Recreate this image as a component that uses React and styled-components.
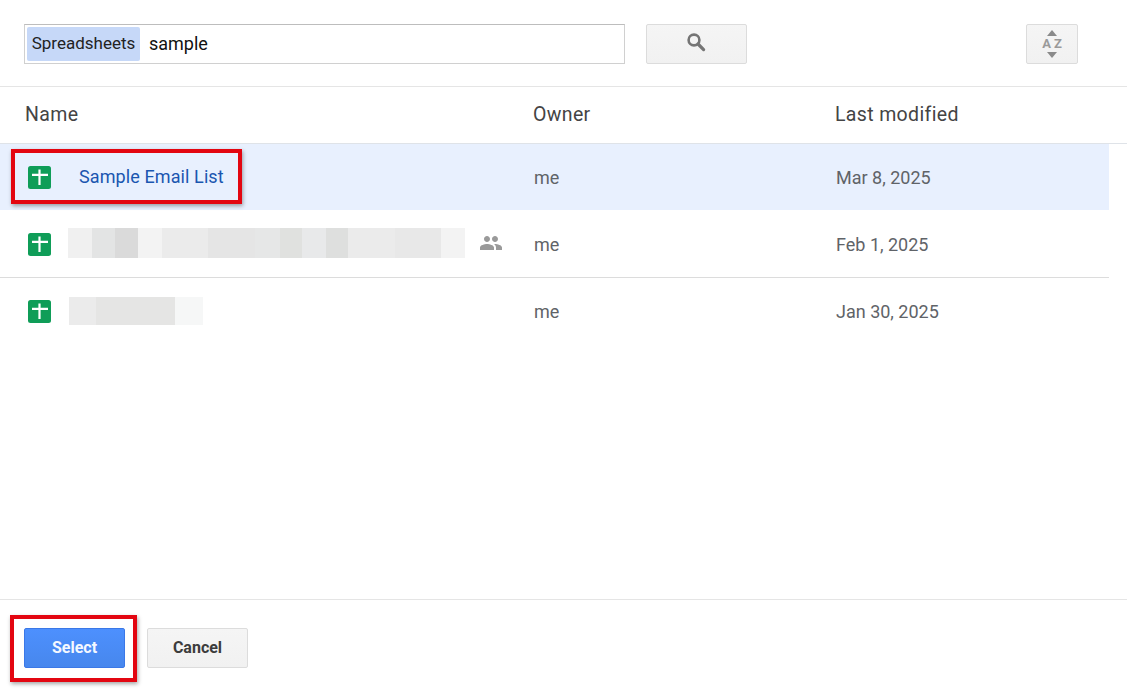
import React from 'react';
import styled, { createGlobalStyle } from 'styled-components';

const GlobalStyle = createGlobalStyle`
  html, body {
    margin: 0;
    padding: 0;
    background: #fff;
    font-family: Roboto, "Liberation Sans", Arial, sans-serif;
  }
`;

const FILES = [
  { id: 1, owner: 'me', date: 'Mar 8, 2025', name: 'Sample Email List', selected: true },
  {
    id: 2,
    owner: 'me',
    date: 'Feb 1, 2025',
    shared: true,
    blur: [
      [24, '#f0f0f0'], [23, '#e3e4e4'], [23, '#dadada'], [24, '#f3f3f3'], [46, '#ebebeb'],
      [47, '#e5e5e5'], [25, '#e6e7e7'], [22, '#e0e1df'], [24, '#e8e9ea'], [22, '#dedfde'],
      [47, '#ebebeb'], [46, '#e8e8e8'], [24, '#f3f3f3'],
    ],
  },
  {
    id: 3,
    owner: 'me',
    date: 'Jan 30, 2025',
    short: true,
    blur: [[27, '#ebebeb'], [79, '#e5e5e4'], [28, '#f6f7f7']],
  },
];

const SheetIcon = () => (
  <svg width="23" height="23" viewBox="0 0 23 23">
    <rect width="23" height="23" rx="2.5" fill="#0f9d58" />
    <path d="M10.4 3.500h2.200v4.200H20v2.200h-7.400V19h-2.200V9.900H4V7.700h6.400z" fill="#fff" />
  </svg>
);

const SearchIcon = () => (
  <svg width="20" height="20" viewBox="0 0 20 20">
    <circle cx="8" cy="8" r="5.4" fill="none" stroke="#757575" strokeWidth="2.6" />
    <path d="M12 12l5.6 5.6" stroke="#757575" strokeWidth="3.2" strokeLinecap="round" />
  </svg>
);

const PeopleIcon = () => (
  <svg width="24" height="24" viewBox="0 0 24 24" fill="#9a9a9a">
    <path d="M16 11c1.66 0 2.99-1.34 2.99-3S17.66 5 16 5s-3 1.34-3 3 1.34 3 3 3zm-8 0c1.66 0 2.99-1.34 2.99-3S9.66 5 8 5 5 6.34 5 8s1.34 3 3 3zm0 2c-2.33 0-7 1.17-7 3.5V19h14v-2.5C15 14.17 10.33 13 8 13zm8 0c-.29 0-.62.02-.97.05 1.16.84 1.97 1.97 1.97 3.45V19h6v-2.5c0-2.33-4.67-3.5-7-3.5z" />
  </svg>
);

const App = () => (
  <Page>
    <GlobalStyle />
    <Toolbar>
      <SearchBox>
        <Chip>Spreadsheets</Chip>
        <Query>sample</Query>
      </SearchBox>
      <SearchButton aria-label="Search">
        <SearchIcon />
      </SearchButton>
      <SortButton aria-label="Sort">
        <SortArrow />
        <SortLetters>AZ</SortLetters>
        <SortArrow $down />
      </SortButton>
    </Toolbar>

    <HeaderRow>
      <NameHead>Name</NameHead>
      <OwnerHead>Owner</OwnerHead>
      <DateHead>Last modified</DateHead>
    </HeaderRow>

    <List>
      {FILES.map((file) => (
        <FileRow key={file.id} $selected={file.selected} $last={file.short}>
          <IconCell>
            <SheetIcon />
          </IconCell>
          <NameCell>
            {file.name ? (
              <FileName>{file.name}</FileName>
            ) : (
              <Mosaic $short={file.short}>
                {file.blur.map(([width, color], i) => (
                  <Tile key={i} $color={color} style={{ width }} />
                ))}
              </Mosaic>
            )}
          </NameCell>
          <SharedCell>{file.shared && <PeopleIcon />}</SharedCell>
          <OwnerCell>{file.owner}</OwnerCell>
          <DateCell>{file.date}</DateCell>
        </FileRow>
      ))}
      <RowMark />
    </List>

    <Footer>
      <SelectButton>
        Select
        <ButtonMark />
      </SelectButton>
      <CancelButton>Cancel</CancelButton>
    </Footer>
  </Page>
);

export default App;

const Page = styled.div`
  width: 1127px;
  height: 694px;
  display: flex;
  flex-direction: column;
  overflow: hidden;
  background: #fff;
`;

const Toolbar = styled.div`
  box-sizing: border-box;
  height: 87px;
  padding: 24px 49px 0 24px;
  display: flex;
  align-items: flex-start;
  border-bottom: 1px solid #e5e5e5;
`;

const SearchBox = styled.div`
  box-sizing: border-box;
  width: 601px;
  height: 40px;
  display: flex;
  align-items: center;
  padding-left: 2px;
  border: 1px solid #d0d0d0;
  border-top-color: #bdbdbd;
`;

const Chip = styled.span`
  box-sizing: border-box;
  width: 113px;
  height: 34px;
  line-height: 33px;
  text-align: center;
  font-size: 17px;
  color: #222;
  background: #c6d8f8;
  border-radius: 2px;
`;

const Query = styled.span`
  margin: -2px 0 0 9px;
  font-size: 18px;
  color: #111;
`;

const GreyButton = styled.button`
  box-sizing: border-box;
  height: 40px;
  padding: 0;
  display: flex;
  align-items: center;
  justify-content: center;
  font-family: inherit;
  background: linear-gradient(#f5f5f5, #f1f1f1);
  border: 1px solid #dcdcdc;
  border-radius: 2px;
`;

const SearchButton = styled(GreyButton)`
  width: 101px;
  margin-left: 21px;
  padding: 0 2px 4px 0;
`;

const SortButton = styled(GreyButton)`
  width: 52px;
  margin-left: auto;
  flex-direction: column;
  gap: 2px;
`;

const SortArrow = styled.span`
  width: 0;
  height: 0;
  border-left: 5px solid transparent;
  border-right: 5px solid transparent;
  ${(p) => (p.$down ? 'border-top: 6px solid #8a8a8a;' : 'border-bottom: 6px solid #8a8a8a;')}
`;

const SortLetters = styled.span`
  padding-left: 3px;
  font-size: 13px;
  line-height: 12px;
  font-weight: 700;
  letter-spacing: 3px;
  color: #9a9a9a;
`;

const HeaderRow = styled.div`
  box-sizing: border-box;
  height: 57px;
  display: flex;
  align-items: center;
  padding-bottom: 2px;
  font-size: 19.5px;
  letter-spacing: 0.35px;
  color: #444;
  border-bottom: 1px solid #dfe3e8;
`;

const NameHead = styled.span`
  width: 533px;
  padding-left: 25px;
  box-sizing: border-box;
`;

const OwnerHead = styled.span`
  width: 302px;
`;

const DateHead = styled.span``;

const List = styled.div`
  position: relative;
  height: 455px;
  border-bottom: 1px solid #e5e5e5;
`;

const FileRow = styled.div`
  box-sizing: border-box;
  width: 1109px;
  height: 67px;
  display: flex;
  align-items: center;
  font-size: 18px;
  color: #5f6368;
  background: ${(p) => (p.$selected ? '#e8f0fe' : 'transparent')};
  border-bottom: 1px solid ${(p) => (p.$last ? 'transparent' : p.$selected ? '#fff' : '#dcdcdc')};
`;

const IconCell = styled.div`
  width: 68px;
  padding-left: 28px;
  box-sizing: border-box;
  display: flex;
`;

const NameCell = styled.div`
  width: 411px;
  display: flex;
  align-items: center;
`;

const FileName = styled.span`
  margin: -2px 0 0 11px;
  letter-spacing: 0.1px;
  color: #1a56b0;
`;

const Mosaic = styled.div`
  display: flex;
  height: ${(p) => (p.$short ? '28px' : '30px')};
  margin-left: ${(p) => (p.$short ? '1px' : '0')};
  margin-top: ${(p) => (p.$short ? '0' : '-2px')};
`;

const Tile = styled.span`
  background: ${(p) => p.$color};
`;

const SharedCell = styled.div`
  width: 55px;
  display: flex;
  margin-top: -2px;
`;

const OwnerCell = styled.div`
  width: 302px;
`;

const DateCell = styled.div``;

const RowMark = styled.div`
  position: absolute;
  left: 11px;
  top: 5px;
  width: 231px;
  height: 55px;
  box-sizing: border-box;
  border: 4px solid #e30611;
  box-shadow: 1px 2px 4px rgba(0, 0, 0, 0.35);
`;

const Footer = styled.div`
  flex: 1;
  display: flex;
  align-items: flex-start;
  gap: 22px;
  padding: 28px 0 0 24px;
`;

const BaseButton = styled.button`
  box-sizing: border-box;
  width: 101px;
  height: 40px;
  padding: 0 0 2px;
  font-family: inherit;
  font-size: 16px;
  font-weight: 700;
  border-radius: 2px;
`;

const SelectButton = styled(BaseButton)`
  position: relative;
  color: #f4f8ff;
  background: linear-gradient(#4d90fe, #4787ed);
  border: 1px solid #3b78e7;
`;

const CancelButton = styled(BaseButton)`
  color: #3c3c3c;
  background: linear-gradient(#f5f5f5, #f1f1f1);
  border: 1px solid #dcdcdc;
`;

const ButtonMark = styled.span`
  position: absolute;
  left: -15px;
  top: -14px;
  width: 127px;
  height: 67px;
  box-sizing: border-box;
  border: 4px solid #e30611;
  box-shadow: 1px 2px 4px rgba(0, 0, 0, 0.35);
`;
